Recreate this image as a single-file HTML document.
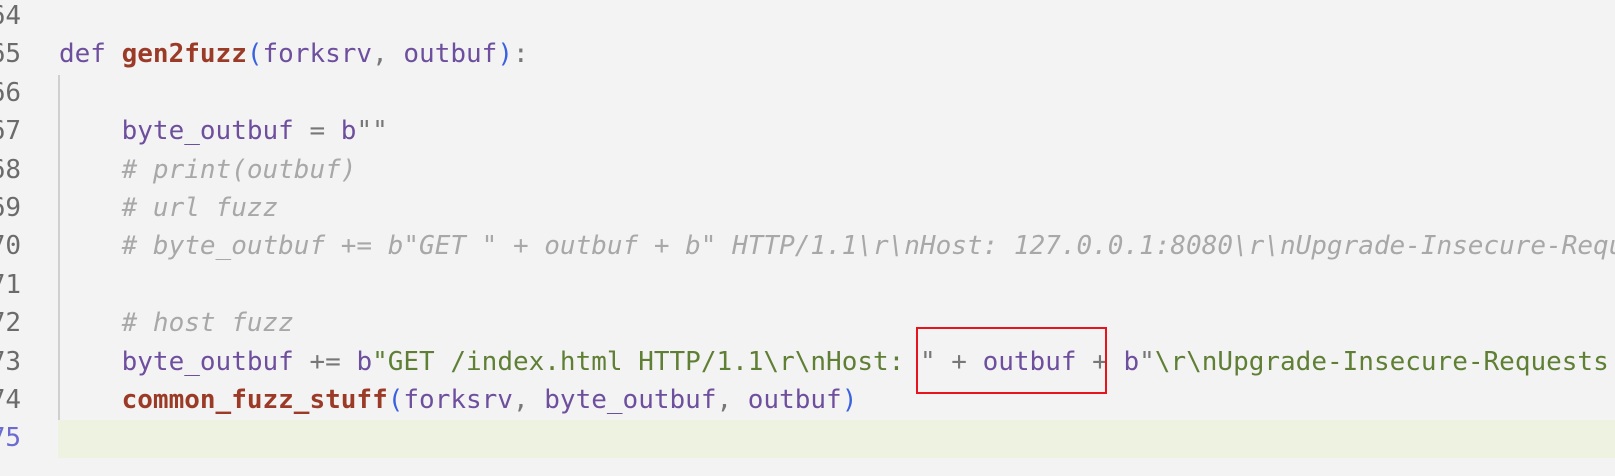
<!DOCTYPE html>
<html><head><style>
html,body{margin:0;width:1615px;height:476px;overflow:hidden;background:#f3f3f3;}
body{position:relative;font-family:"DejaVu Sans Mono","Liberation Mono",monospace;font-size:26px;}
.l{position:absolute;left:0;height:38.4px;line-height:38.4px;white-space:pre;width:1615px;overflow:hidden;}
.n{position:absolute;right:1594px;color:#6b6b6b;}
.c{position:absolute;left:59px;}
.k{color:#6e4f9e}.v{color:#6e4f9e}.f{color:#9b3b27;font-weight:bold}.p{color:#3a62e0}
.s{color:#5f7f35}.o{color:#777}.cm{color:#a8a8a8;font-style:italic}
#cur{position:absolute;left:58px;top:420px;width:1557px;height:38px;background:#eef2e1;}
#guide{position:absolute;left:58px;top:75px;width:2px;height:345px;background:#cfcfcf;}
#box{position:absolute;left:916px;top:327px;width:187px;height:63px;border:2px solid #e8141c;}
</style></head><body>
<div id="cur"></div><div id="guide"></div>
<div class="l" style="top:-3px"><span class="n">64</span></div>
<div class="l" style="top:35.4px"><span class="n">65</span><span class="c"><span class="k">def</span> <span class="f">gen2fuzz</span><span class="p">(</span><span class="v">forksrv</span><span class="o">,</span> <span class="v">outbuf</span><span class="p">)</span><span class="o">:</span></span></div>
<div class="l" style="top:73.8px"><span class="n">66</span></div>
<div class="l" style="top:112.2px"><span class="n">67</span><span class="c">    <span class="v">byte_outbuf</span> <span class="o">=</span> <span class="v">b</span><span class="o">""</span></span></div>
<div class="l" style="top:150.6px"><span class="n">68</span><span class="c">    <span class="cm"># print(outbuf)</span></span></div>
<div class="l" style="top:189px"><span class="n">69</span><span class="c">    <span class="cm"># url fuzz</span></span></div>
<div class="l" style="top:227.4px"><span class="n">70</span><span class="c">    <span class="cm"># byte_outbuf += b"GET " + outbuf + b" HTTP/1.1\r\nHost: 127.0.0.1:8080\r\nUpgrade-Insecure-Requests</span></span></div>
<div class="l" style="top:265.8px"><span class="n">71</span></div>
<div class="l" style="top:304.2px"><span class="n">72</span><span class="c">    <span class="cm"># host fuzz</span></span></div>
<div class="l" style="top:342.6px"><span class="n">73</span><span class="c">    <span class="v">byte_outbuf</span> <span class="o">+=</span> <span class="v">b</span><span class="s">"GET /index.html HTTP/1.1\r\nHost: </span><span class="o">"</span> <span class="o">+</span> <span class="v">outbuf</span> <span class="o">+</span> <span class="v">b</span><span class="o">"</span><span class="s">\r\nUpgrade-Insecure-Requests</span></span></div>
<div class="l" style="top:381px"><span class="n">74</span><span class="c">    <span class="f">common_fuzz_stuff</span><span class="p">(</span><span class="v">forksrv</span><span class="o">,</span> <span class="v">byte_outbuf</span><span class="o">,</span> <span class="v">outbuf</span><span class="p">)</span></span></div>
<div class="l" style="top:419.4px"><span class="n" style="color:#6b6bd0">75</span></div>
<div id="box"></div>
</body></html>
